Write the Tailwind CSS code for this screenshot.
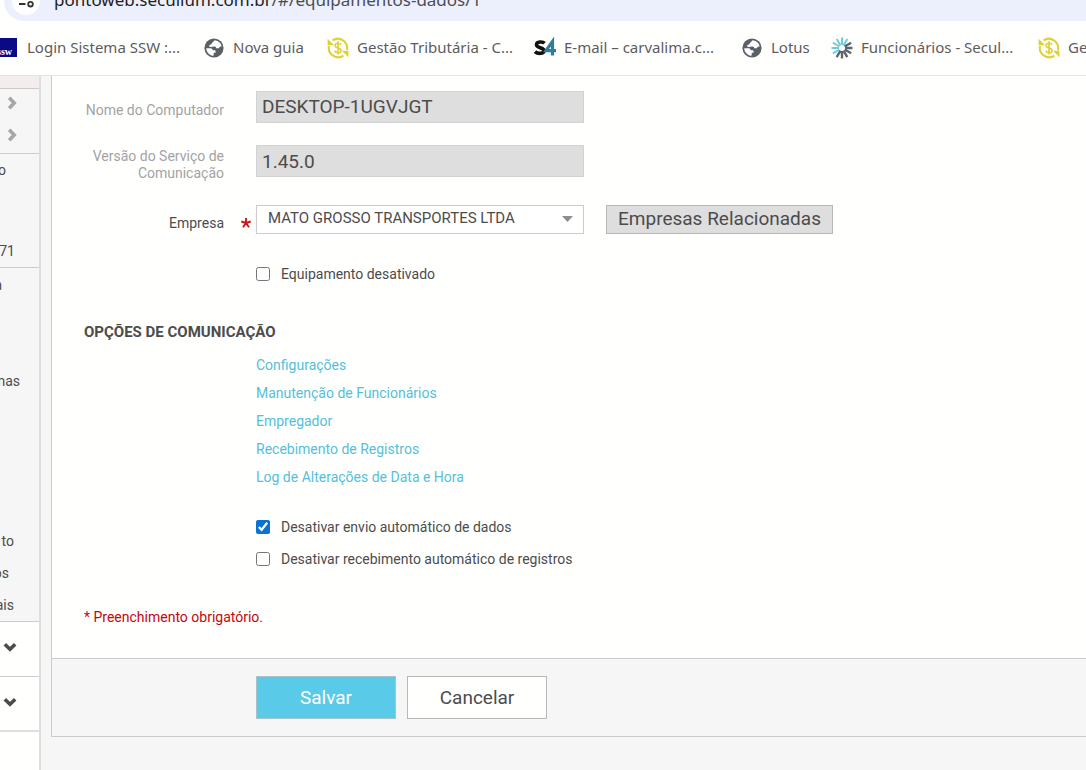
<!DOCTYPE html>
<html lang="pt-BR">
<head>
<meta charset="utf-8">
<title>Secullum Ponto Web</title>
<script src="https://cdn.jsdelivr.net/npm/@tailwindcss/browser@4"></script>
</head>
<body class="flex h-screen flex-col overflow-hidden bg-[#f6f6f6] font-['Roboto',sans-serif] text-sm text-[#4c4c4c]">

<svg class="hidden" aria-hidden="true">
  <symbol id="globe" viewBox="0 0 20 20">
    <circle cx="10" cy="10" r="9.6" fill="#5b6066"/>
    <path fill="#fff" d="M10.800 2.200c-1.200.5-1.400 1.100-1.300 1.800-1.200.2-1.900.9-1.800 1.900l-2 1c-.7.500-.7 1.300-.3 1.900l2.200.2c.8-.7 1.800-.7 3-.5 1.200.2 1.500.9 1.600 1.700h2.600c.5-1.300 1.500-1.900 2.900-1.700a8 8 0 0 0-6.900-6.300zM2.200 10.200l4.500.1c1.400.1 1.900.9 1.900 2h1.900c.8 0 1.100.5 1.100 1.200v1.200H9.700v2l-.6 1.200A7.900 7.900 0 0 1 2.200 10.200z"/>
  </symbol>
  <symbol id="coin" viewBox="0 0 22 22">
    <g fill="none" stroke="#e0cf35" stroke-width="2.100">
      <path d="M5.500 3.400A9.400 9.400 0 0 1 20 13"/>
      <path d="M16.500 18.600A9.400 9.400 0 0 1 2 9"/>
      <path d="M14 7.800c-.5-1.100-1.500-1.600-3-1.600-1.700 0-2.900.8-2.900 2.200 0 3.400 6 1.600 6 5 0 1.500-1.300 2.300-3.100 2.300-1.700 0-2.800-.7-3.300-2M11 4.300v13.200" stroke-width="1.600"/>
    </g>
    <path fill="#e0cf35" d="M.6 1.800v6.400h6.500zM21.400 20.200v-6.400h-6.500z"/>
  </symbol>
  <symbol id="down" viewBox="0 0 14 10">
    <path d="M1.800 2.200 7 7.200l5.200-5" fill="none" stroke="currentColor" stroke-width="3.600"/>
  </symbol>
  <symbol id="right" viewBox="0 0 10 14">
    <path d="M2.200 1.800 7.200 7l-5 5.200" fill="none" stroke="currentColor" stroke-width="3.600"/>
  </symbol>
</svg>

<header class="shrink-0 border-b border-[#e4e4e6] bg-[#fffffe]">
  <div class="flex h-[21px] items-end overflow-hidden pl-1">
    <div class="flex h-10 flex-1 shrink-0 items-center rounded-l-full bg-[#ecf0fd] pl-2">
      <button type="button" aria-label="Informações do site" class="flex size-7 items-center justify-center rounded-full bg-white">
        <svg class="size-4" viewBox="0 0 16 16" fill="none" stroke="#333" stroke-width="1.800"><circle cx="3.500" cy="4" r="2.200"/><path d="M8 4h7M1 11h6.500"/><circle cx="12.500" cy="11.200" r="2.300"/></svg>
      </button>
      <a href="#" class="ml-3.5 pb-0.5 whitespace-nowrap font-['Noto_Sans',sans-serif] text-[17px] leading-6 text-[#1f2024]">pontoweb.secullum.com.br<span class="text-[#4a4c55]">/#/equipamentos-dados/1</span></a>
    </div>
  </div>
  <nav aria-label="Favoritos" class="flex h-[54px] items-center overflow-hidden whitespace-nowrap font-['Noto_Sans',sans-serif] text-[15px] text-[#5c5c5e]">
    <a href="#" class="flex w-[204px] shrink-0 items-center gap-[10px]">
      <svg class="h-5 w-[17px]" viewBox="0 0 17 20"><path fill="#0a0a86" d="M0 0h17v19H0z"/><text x="-3" y="17" fill="#fff" font-family="Liberation Serif" font-weight="bold" font-size="10">ssw</text></svg>
      Login Sistema SSW :...</a>
    <a href="#" class="flex w-[123px] shrink-0 items-center gap-[9px]"><svg class="size-5"><use href="#globe"/></svg>Nova guia</a>
    <a href="#" class="flex w-[207px] shrink-0 items-center gap-2"><svg class="size-[22px]"><use href="#coin"/></svg>Gestão Tributária - C...</a>
    <a href="#" class="flex w-[208px] shrink-0 items-center gap-2">
      <svg class="size-[22px]" viewBox="0 0 22 22" fill="none"><path d="M10.500 6.300C9 4.600 2.500 4.200 2.500 7.800c0 3.600 7.500 2.200 7.500 5.800 0 3.600-6.500 3.300-9 1.100" stroke="#111" stroke-width="3.600"/><path d="M18.500 18.500V4.500l-6.500 9.200h10" stroke="#2f7f9c" stroke-width="3.200"/></svg>
      E-mail – carvalima.c...</a>
    <a href="#" class="flex w-[89px] shrink-0 items-center gap-[9px]"><svg class="size-5"><use href="#globe"/></svg>Lotus</a>
    <a href="#" class="flex w-[207px] shrink-0 items-center gap-2">
      <svg class="size-[22px]" viewBox="-11 -11 22 22" stroke-width="2"><g stroke="#74cbe0"><path d="M0-3v-7.500M-1.500-2.600l-3.800-6.500M-2.600-1.500l-6.500-3.800M-3 0h-7.500M-2.600 1.500l-6.500 3.800M1.500-2.600l3.800-6.500"/></g><g stroke="#5f656c" stroke-width="2.400"><path d="M2.600-1.500l6.500-3.800M3 0h7.500M2.600 1.500l6.500 3.800M1.500 2.600l3.800 6.500M0 3v7.500M-1.500 2.600l-3.800 6.500"/></g></svg>
      Funcionários - Secul...</a>
    <a href="#" class="flex shrink-0 items-center gap-2"><svg class="size-[22px]"><use href="#coin"/></svg>Gestão</a>
  </nav>
</header>

<div class="flex min-h-0 flex-1">
  <aside class="flex w-[41px] shrink-0 flex-col overflow-hidden border-r-2 border-[#dedede] leading-8">
    <div class="h-[13px] shrink-0 border-b border-[#ccc] bg-[#f3edee]"></div>
    <div class="h-[65px] shrink-0 border-b border-[#ccc] pl-[7px] text-[#a6a6a6]">
      <button type="button" aria-label="Expandir" class="flex h-7 items-center"><svg class="h-3.5 w-2.5"><use href="#right"/></svg></button>
      <button type="button" aria-label="Expandir" class="mt-1 flex h-7 items-center"><svg class="h-3.5 w-2.5"><use href="#right"/></svg></button>
    </div>
    <div class="flex h-[114px] shrink-0 flex-col justify-between border-b border-[#ccc]">
      <div class="flex w-[6px] justify-end">o</div>
      <div class="flex w-[15px] justify-end">71</div>
    </div>
    <div class="h-[354px] shrink-0 border-b border-[#ccc] pt-px">
      <div class="flex w-[2px] justify-end">a</div>
      <div class="mt-16 flex w-5 justify-end">nas</div>
      <div class="mt-32 flex w-3.5 justify-end">to</div>
      <div class="flex w-[9px] justify-end">os</div>
      <div class="flex w-3.5 justify-end">ais</div>
    </div>
    <button type="button" aria-label="Abrir menu" class="flex h-[55px] shrink-0 items-center border-b border-[#ccc] bg-[#fffffe] pb-1 pl-[3px]"><svg class="h-2.5 w-3.5"><use href="#down"/></svg></button>
    <button type="button" aria-label="Abrir menu" class="flex h-[55px] shrink-0 items-center border-b-2 border-[#dedede] bg-[#fffffe] pb-1 pl-[3px]"><svg class="h-2.5 w-3.5"><use href="#down"/></svg></button>
    <div class="flex-1 bg-[#fffffe]"></div>
  </aside>

  <main class="ml-[10px] flex-1">
    <form class="border-b border-l border-[#ccc] bg-[#fffffe]">
      <div class="pt-[15px] pb-[31px]">
        <div class="grid grid-cols-[172px_328px_auto] items-center justify-start gap-x-8">
          <label for="nome" class="pt-1.5 text-right text-[#a3a3a3]">Nome do Computador</label>
          <input id="nome" type="text" readonly value="DESKTOP-1UGVJGT" class="h-8 w-full border border-[#d2d2d2] bg-[#dedede] px-[5px] pb-0.5 text-[19px]">
        </div>
        <div class="mt-[22px] grid grid-cols-[172px_328px_auto] items-center justify-start gap-x-8">
          <label for="versao" class="-mb-2 pl-8 text-right leading-[17px] text-[#a3a3a3]">Versão do Serviço de Comunicação</label>
          <input id="versao" type="text" readonly value="1.45.0" class="h-8 w-full border border-[#d2d2d2] bg-[#dedede] px-[5px] text-[19px]">
        </div>
        <div class="mt-7 flex items-center">
          <label for="empresa" class="w-[172px] pt-1.5 text-right">Empresa</label>
          <svg class="mx-[17px] mt-1.5 mr-[5px] size-[10px]" viewBox="-5 -5 10 10" stroke="#c4161c" stroke-width="1.900"><path d="M0 0v-5M0 0l4.700-1.500M0 0l3 4.200M0 0l-3 4.200M0 0l-4.700-1.500"/></svg>
          <div class="relative w-[328px]">
            <select id="empresa" class="h-[29px] w-full appearance-none border border-[#ccc] bg-white px-[11px] pb-0.5 text-[15px]"><option>MATO GROSSO TRANSPORTES LTDA</option></select>
            <svg class="pointer-events-none absolute top-[11px] right-[11px] h-1.5 w-[11px]" viewBox="0 0 11 6"><path fill="#8f8f8f" d="M0 0h11L5.500 6z"/></svg>
          </div>
          <button type="button" class="ml-[22px] h-[29px] w-[227px] border border-[#b8b8b8] bg-[#dedede] pb-0.5 text-[19px] leading-none">Empresas Relacionadas</button>
        </div>
        <label class="mt-[30px] ml-[204px] flex h-5 items-center gap-[11px]"><input type="checkbox" class="size-3.5">Equipamento desativado</label>
        <h2 class="mt-[38px] ml-8 h-5 text-[15px] leading-5 font-bold">OPÇÕES DE COMUNICAÇÃO</h2>
        <div class="mt-[9px] ml-[204px] flex flex-col items-start leading-7 text-[#54bfd9]">
          <a href="#">Configurações</a>
          <a href="#">Manutenção de Funcionários</a>
          <a href="#">Empregador</a>
          <a href="#">Recebimento de Registros</a>
          <a href="#">Log de Alterações de Data e Hora</a>
        </div>
        <div class="mt-5 ml-[204px]">
          <label class="flex h-8 items-center gap-[11px]"><input type="checkbox" checked class="size-3.5 accent-[#0a72d0]">Desativar envio automático de dados</label>
          <label class="flex h-8 items-center gap-[11px]"><input type="checkbox" class="size-3.5">Desativar recebimento automático de registros</label>
        </div>
        <p class="mt-8 ml-8 h-5 text-[#c4060f]">* Preenchimento obrigatório.</p>
      </div>
      <div class="flex gap-[11px] border-t border-[#ccc] bg-[#f6f6f6] py-[17px] pl-[204px] text-[19px]">
        <button type="submit" class="h-[43px] w-[140px] border border-[#a9c3cb] bg-[#59cae8] text-white">Salvar</button>
        <button type="button" class="h-[43px] w-[140px] border border-[#b8b8b8] bg-[#fffffe]">Cancelar</button>
      </div>
    </form>
  </main>
</div>
</body>
</html>
